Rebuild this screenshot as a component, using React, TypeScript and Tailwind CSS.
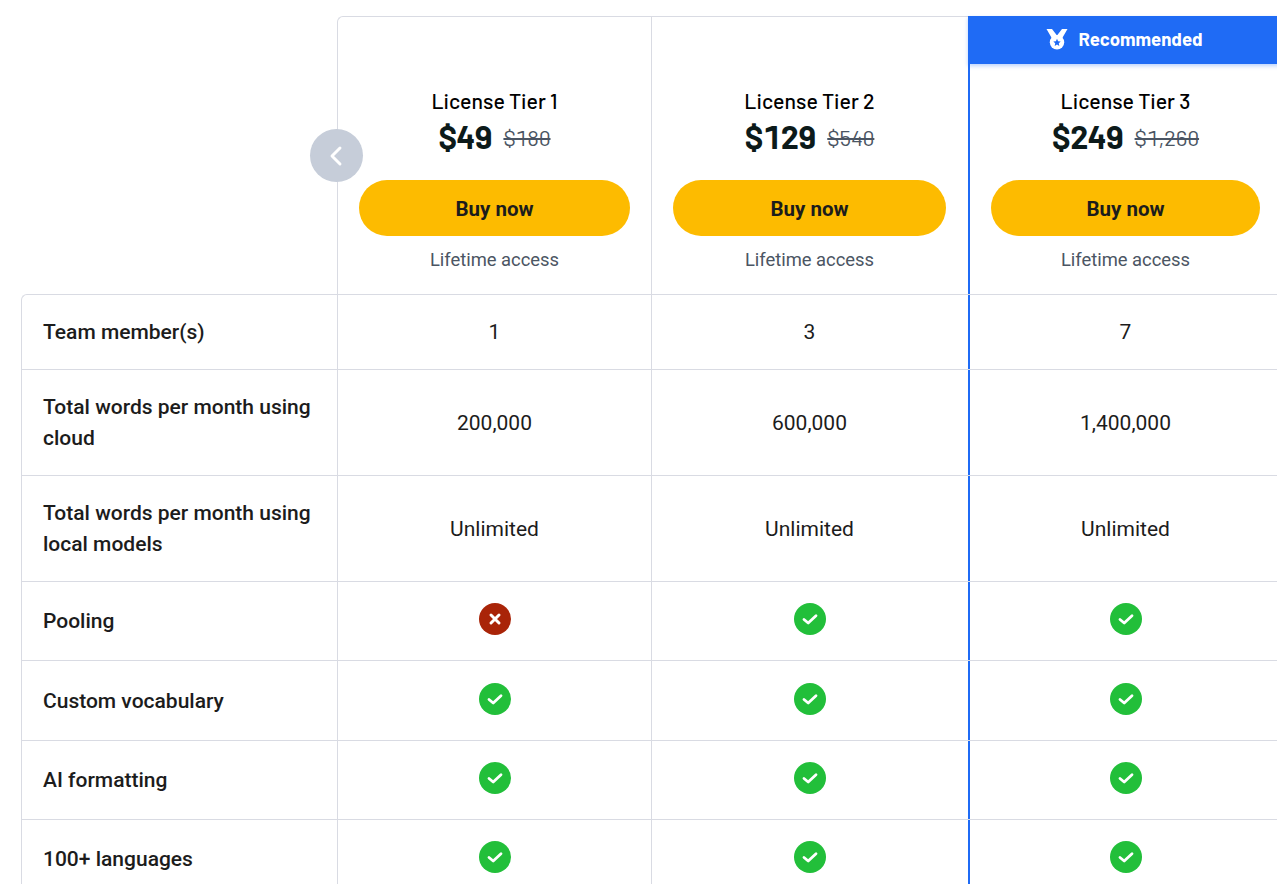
import { ChevronLeft } from 'lucide-react';

const HEADING = "font-['Barlow','Roboto',sans-serif]";

const PLANS = [
  { name: 'License Tier 1', price: '$49', was: '$180', btn: 'w-[271px]' },
  { name: 'License Tier 2', price: '$129', was: '$540', btn: 'w-[273px]' },
  { name: 'License Tier 3', price: '$249', was: '$1,260', btn: 'w-[269px]' },
];

type Row = { label: string; values: (string | boolean)[]; height: string };

const ROWS: Row[] = [
  { label: 'Team member(s)', values: ['1', '3', '7'], height: 'h-[74px]' },
  { label: 'Total words per month using cloud', values: ['200,000', '600,000', '1,400,000'], height: 'h-[106px]' },
  { label: 'Total words per month using local models', values: ['Unlimited', 'Unlimited', 'Unlimited'], height: 'h-[106px]' },
  { label: 'Pooling', values: [false, true, true], height: 'h-[79px]' },
  { label: 'Custom vocabulary', values: [true, true, true], height: 'h-[80px]' },
  { label: 'AI formatting', values: [true, true, true], height: 'h-[79px]' },
  { label: '100+ languages', values: [true, true, true], height: 'h-[79px]' },
];

const COLUMN_BORDERS = [
  'w-[314px] border-l border-[#d9dbe3]',
  'w-[317px] border-l border-[#d9dbe3] pr-px',
  'w-[313px] shrink-0 border-l-2 border-[#1f6bf5]',
];

function Mark({ ok }: { ok: boolean }) {
  return (
    <svg viewBox="0 0 32 32" className="h-8 w-8 -translate-y-[3px]" aria-hidden="true">
      <circle cx="16" cy="16" r="16" fill={ok ? '#22bf3a' : '#a92408'} />
      {ok ? (
        <path d="M10 16.500l4.200 3.500 7.800-7.200" fill="none" stroke="#fff" strokeWidth="2.800" strokeLinecap="round" strokeLinejoin="round" />
      ) : (
        <path d="M12 12l8 8M20 12l-8 8" fill="none" stroke="#fff" strokeWidth="3" strokeLinecap="round" />
      )}
    </svg>
  );
}

function Medal() {
  return (
    <svg viewBox="0 0 22 22" className="h-[22px] w-[22px]" aria-hidden="true">
      <path d="M0.500 1h5.500l5 6.500 5-6.500h5.500l-5.500 9.500h-10z" fill="#fff" />
      <circle cx="11" cy="14.300" r="7.200" fill="#fff" />
      <path d="M11 10.800l1.100 2.400 2.600.3-1.900 1.800.5 2.600-2.300-1.300-2.300 1.300.5-2.600-1.900-1.800 2.600-.3z" fill="#1f6bf5" />
    </svg>
  );
}

export default function App() {
  return (
    <div className="h-[884px] w-[1277px] overflow-hidden bg-white pl-[21px] pt-4 font-['Roboto',sans-serif] text-[#1c1c1c]">
      <div className="relative w-[1263px]">
        <div className="flex h-[278px]">
          <div className="w-[316px]" />
          {PLANS.map((plan, i) => (
            <div
              key={plan.name}
              className={`${COLUMN_BORDERS[i]} flex flex-col items-center ${i === 0 ? 'rounded-tl-md border-t' : i === 1 ? 'border-t' : ''}`}
            >
              {i === 2 ? (
                <div className="-ml-0.5 flex h-12 w-[calc(100%+2px)] shrink-0 items-center justify-center gap-[10px] bg-[#1f6bf5] pb-0.5 shadow-[0_2px_4px_rgba(31,107,245,0.3)]">
                  <Medal />
                  <span className={`${HEADING} text-[18.600px] leading-7 font-bold text-white`}>Recommended</span>
                </div>
              ) : (
                <div className="h-[47px] shrink-0" />
              )}
              <div className={`${HEADING} mt-6 text-[21.300px] leading-[25px] font-medium text-black`}>{plan.name}</div>
              <div className="mt-[3px] flex h-10 items-center gap-[11px] tabular-nums">
                <span className={`${HEADING} text-[32.500px] leading-10 font-bold text-[#0c1a1a]`}>{plan.price}</span>
                <span className={`${HEADING} mt-0.5 text-[22px] leading-6 text-[#4b5563] line-through`}>{plan.was}</span>
              </div>
              <button type="button" className={`${plan.btn} mt-6 h-14 shrink-0 rounded-full bg-[#fdbb00] pt-0.5 text-[20.500px] font-bold text-[#1c1c1c]`}>
                Buy now
              </button>
              <div className="mt-3 text-[18.400px] leading-6 text-[#4b5563]">Lifetime access</div>
            </div>
          ))}
        </div>

        <div className="overflow-hidden rounded-tl-md border-t border-l border-[#d9dbe3]">
          {ROWS.map((row, r) => (
            <div key={row.label} className={`flex ${row.height} ${r > 0 ? 'border-t border-[#d9dbe3]' : ''}`}>
              <div className="flex w-[315px] items-center pt-px pr-4 pl-[21px] text-[21px] leading-[31px] font-medium">
                {row.label}
              </div>
              {row.values.map((value, i) => (
                <div key={i} className={`${COLUMN_BORDERS[i]} flex items-center justify-center pt-0.5 text-[21px]`}>
                  {typeof value === 'boolean' ? <Mark ok={value} /> : value}
                </div>
              ))}
            </div>
          ))}
        </div>

        <button
          type="button"
          aria-label="Previous"
          className="absolute top-[113px] left-[289px] flex h-[53px] w-[53px] items-center justify-center rounded-full bg-[#c6cdd9] pr-0.5 text-white"
        >
          <ChevronLeft size={32} strokeWidth={2.2} />
        </button>
      </div>
    </div>
  );
}
